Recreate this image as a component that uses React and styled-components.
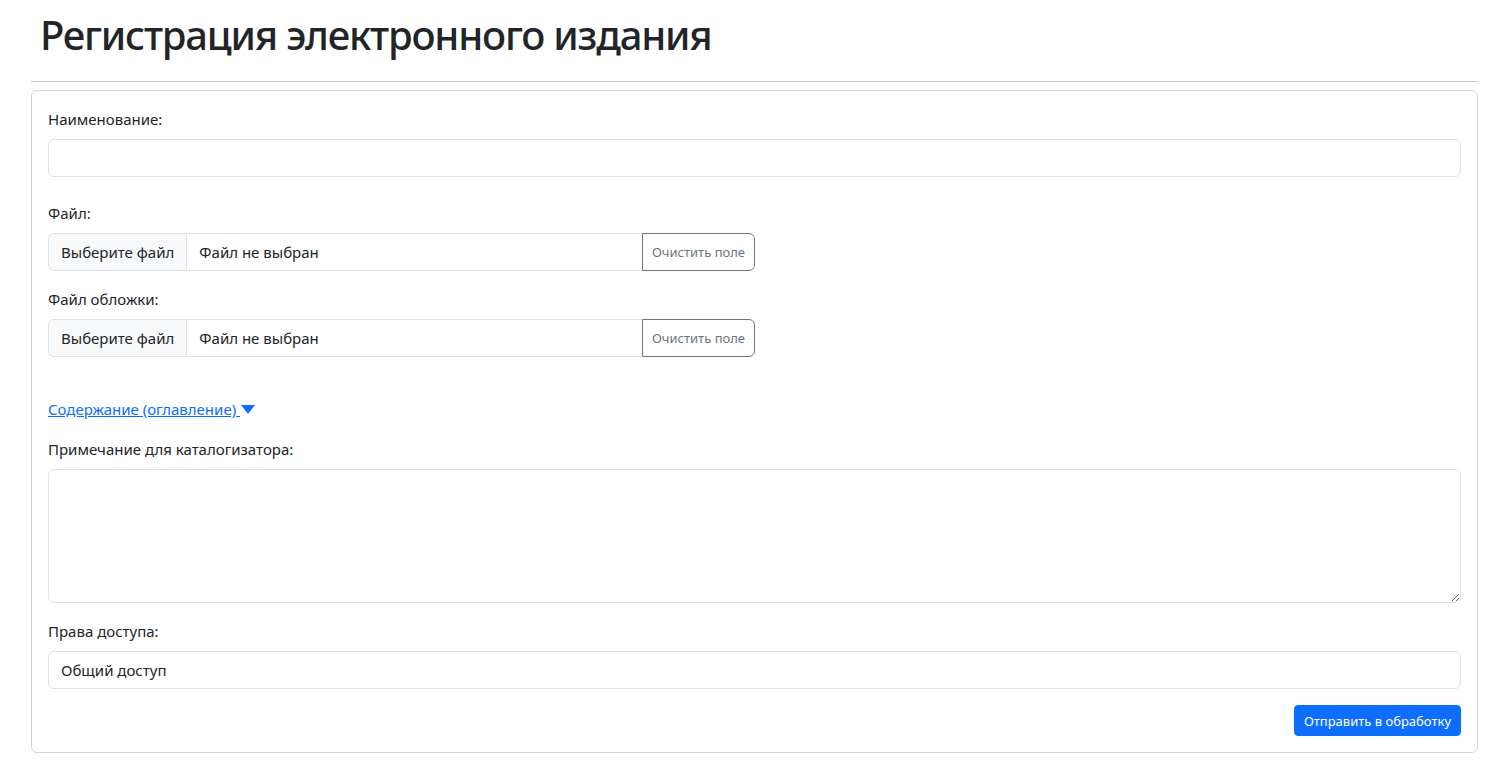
import React from 'react';
import styled, { createGlobalStyle } from 'styled-components';

const GlobalStyle = createGlobalStyle`
  body {
    margin: 0;
    font-family: "Noto Sans", "Open Sans", sans-serif;
    font-size: 16px;
    line-height: 1.5;
    color: #212529;
    background: #fff;
  }
  * { box-sizing: border-box; }
`;

const Page = styled.div`
  padding: 11px 19px 20px 31px;
`;

const Title = styled.h1`
  margin: 0 0 0 9px;
  font-size: 40px;
  line-height: 48px;
  font-weight: 500;
  letter-spacing: -1.2px;
`;

const Divider = styled.hr`
  margin: 22px 0 8px;
  border: 0;
  border-top: 1px solid #c9cacb;
`;

const Card = styled.form`
  border: 1px solid #d3d4d5;
  border-radius: 6px;
  padding: 16px;
  display: flex;
  flex-direction: column;
`;

const Field = styled.div`
  margin-bottom: ${p => p.gap || 16}px;
`;

const Label = styled.label`
  display: block;
  margin-bottom: 8px;
  font-size: 15px;
  line-height: 24px;
`;

const Input = styled.input`
  display: block;
  width: 100%;
  height: 38px;
  padding: 6px 12px;
  font: inherit;
  font-size: 15px;
  color: #212529;
  border: 1px solid #dee2e6;
  border-radius: 6px;
  background: #fff;
  outline: none;
`;

const TextArea = styled.textarea`
  display: block;
  width: 100%;
  height: 134px;
  padding: 6px 12px;
  font: inherit;
  border: 1px solid #dee2e6;
  border-radius: 6px;
  resize: vertical;
  outline: none;
`;

const FileGroup = styled.div`
  display: flex;
  width: 707px;
  height: 38px;
`;

const FileBox = styled.div`
  flex: 1;
  display: flex;
  border: 1px solid #dee2e6;
  border-right: 0;
  border-radius: 6px 0 0 6px;
  overflow: hidden;
  font-size: 15px;
`;

const FileButton = styled.span`
  display: flex;
  align-items: center;
  padding: 0 12px;
  background: #f8f9fa;
  border-right: 1px solid #dee2e6;
`;

const FileName = styled.span`
  display: flex;
  align-items: center;
  padding: 0 12px;
`;

const ClearButton = styled.button`
  width: 113px;
  padding: 0 8px;
  font-family: inherit;
  font-size: 13px;
  color: #6c757d;
  background: #fff;
  border: 1px solid #6c757d;
  border-radius: 0 6px 6px 0;
`;

const Toggle = styled.a`
  display: inline-flex;
  align-items: center;
  margin-top: 24px;
  color: #0d6efd;
  font-size: 15px;
  line-height: 24px;
  text-decoration: underline;
  cursor: pointer;
`;

const Caret = styled.svg`
  width: 14px;
  height: 9px;
  margin-left: 1px;
  fill: #0d6efd;
`;

const Actions = styled.div`
  display: flex;
  justify-content: flex-end;
`;

const SubmitButton = styled.button`
  height: 31px;
  padding: 0 9px;
  font-family: inherit;
  font-size: 13px;
  color: #fff;
  background: #0d6efd;
  border: 1px solid #0d6efd;
  border-radius: 4px;
`;

function FileInput() {
  return (
    <FileGroup>
      <FileBox>
        <FileButton>Выберите файл</FileButton>
        <FileName>Файл не выбран</FileName>
      </FileBox>
      <ClearButton type="button">Очистить поле</ClearButton>
    </FileGroup>
  );
}

export default function App() {
  return (
    <Page>
      <GlobalStyle />
      <Title>Регистрация электронного издания</Title>
      <Divider />
      <Card onSubmit={e => e.preventDefault()}>
        <Field gap={24}>
          <Label>Наименование:</Label>
          <Input type="text" />
        </Field>
        <Field>
          <Label>Файл:</Label>
          <FileInput />
        </Field>
        <Field>
          <Label>Файл обложки:</Label>
          <FileInput />
        </Field>
        <Field>
          <Toggle>
            Содержание (оглавление)&nbsp;
            <Caret viewBox="0 0 14 9"><path d="M0 0h14L7 9z" /></Caret>
          </Toggle>
        </Field>
        <Field>
          <Label>Примечание для каталогизатора:</Label>
          <TextArea />
        </Field>
        <Field>
          <Label>Права доступа:</Label>
          <Input type="text" defaultValue="Общий доступ" readOnly />
        </Field>
        <Actions>
          <SubmitButton type="submit">Отправить в обработку</SubmitButton>
        </Actions>
      </Card>
    </Page>
  );
}
